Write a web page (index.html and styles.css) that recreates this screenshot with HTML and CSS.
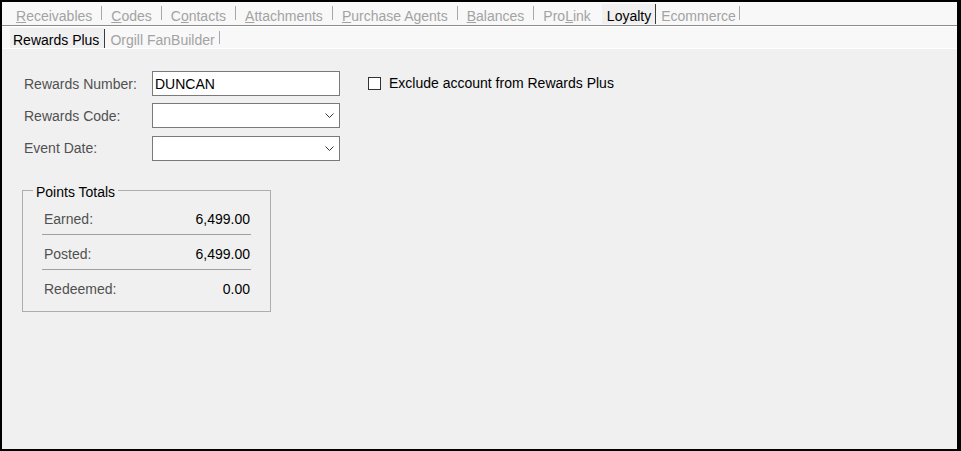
FILE: index.html
```html
<!DOCTYPE html>
<html>
<head>
<meta charset="utf-8">
<link rel="stylesheet" href="styles.css">
</head>
<body>
<div class="window">
  <div class="tabs tabs-main">
    <span class="tab first"><u>R</u>eceivables</span><span class="sep"></span>
    <span class="tab"><u>C</u>odes</span><span class="sep"></span>
    <span class="tab">C<u>o</u>ntacts</span><span class="sep"></span>
    <span class="tab"><u>A</u>ttachments</span><span class="sep"></span>
    <span class="tab"><u>P</u>urchase Agents</span><span class="sep"></span>
    <span class="tab"><u>B</u>alances</span><span class="sep"></span>
    <span class="tab">Pro<u>L</u>ink</span><span class="sep hidden"></span>
    <span class="tab active">Loyalty</span><span class="sep dark"></span>
    <span class="tab after-active">Ecommerce</span><span class="sep"></span>
  </div>
  <div class="tabs tabs-sub">
    <span class="tab active">Rewards Plus</span><span class="sep dark"></span>
    <span class="tab after-active">Orgill FanBuilder</span><span class="sep"></span>
  </div>
  <div class="content">
    <div class="top">
      <div class="form">
        <span class="label">Rewards Number:</span>
        <div class="field text">DUNCAN</div>
        <span class="label">Rewards Code:</span>
        <div class="field combo"><svg class="chev" width="9" height="5" viewBox="0 0 9 5"><path d="M0.5 0.5 L4.5 4.5 L8.5 0.5" fill="none" stroke="#3a3a3a" stroke-width="1"/></svg></div>
        <span class="label last">Event Date:</span>
        <div class="field combo last"><svg class="chev" width="9" height="5" viewBox="0 0 9 5"><path d="M0.5 0.5 L4.5 4.5 L8.5 0.5" fill="none" stroke="#3a3a3a" stroke-width="1"/></svg></div>
      </div>
      <label class="check"><span class="box"></span><span class="check-text">Exclude account from Rewards Plus</span></label>
    </div>
    <div class="group">
      <span class="legend">Points Totals</span>
      <div class="row"><span class="row-label">Earned:</span><span class="row-value">6,499.00</span></div>
      <div class="row"><span class="row-label">Posted:</span><span class="row-value">6,499.00</span></div>
      <div class="row last"><span class="row-label">Redeemed:</span><span class="row-value">0.00</span></div>
    </div>
  </div>
</div>
</body>
</html>
```

FILE: styles.css
```css
html, body {
  margin: 0;
  padding: 0;
  background: #000;
}

body {
  font-family: "Liberation Sans", Arial, sans-serif;
  font-size: 14px;
}

.window {
  width: 961px;
  height: 451px;
  box-sizing: border-box;
  border-style: solid;
  border-color: #000;
  border-width: 2px 4px 2px 2px;
  background: #f0f0f0;
  display: flex;
  flex-direction: column;
}

.tabs {
  display: flex;
  align-items: flex-start;
  background: #f8f8f8;
  white-space: nowrap;
}

.tabs-main {
  height: 23px;
  border-bottom: 1px solid #8c8c8c;
  box-shadow: 0 1px 0 #ffffff;
  padding-left: 5px;
  margin-bottom: 1px;
}

.tabs-sub {
  height: 21px;
  border-bottom: 1px solid #ffffff;
  padding-left: 8px;
}

.tab {
  color: #a3a3a3;
  box-sizing: border-box;
  height: 20px;
  padding: 4px 9px 0 9px;
  line-height: 16px;
  margin-top: 2px;
}

.tab u {
  text-decoration-thickness: 1px;
  text-underline-offset: 1px;
}

.tab.active {
  color: #000;
  background: #f0f0f0;
  padding: 4px 4px 0 5px;
  margin-left: 1px;
}

.tab.after-active {
  padding: 4px 3px 0 5px;
}

.sep {
  width: 1px;
  height: 14px;
  margin-top: 4px;
  background: #a8a8a8;
}

.sep.hidden {
  background: transparent;
}

.sep.dark {
  background: #3c3c3c;
  height: 20px;
  margin-top: 2px;
}

.tabs-sub .tab {
  margin-top: 1px;
  padding-top: 4px;
  line-height: 16px;
}

.tabs-sub .tab.active {
  margin-left: 0;
  padding-left: 3px;
  padding-right: 5px;
}

.tabs-sub .tab.after-active {
  padding-left: 5px;
  padding-right: 4px;
}

.tabs-sub .sep {
  margin-top: 4px;
  height: 13px;
}

.tabs-sub .sep.dark {
  margin-top: 2px;
  height: 19px;
}

.content {
  flex: 1;
  padding: 22px 0 0 20px;
}

.top {
  display: flex;
  align-items: flex-start;
}

.form {
  display: grid;
  grid-template-columns: 128px 188px;
  grid-auto-rows: 25px;
  row-gap: 7px;
  margin-left: 2px;
  align-items: center;
}

.label {
  color: #505050;
  line-height: 16px;
}

.label.last,
.field.last {
  margin-top: 1px;
}

.field {
  box-sizing: border-box;
  height: 25px;
  border: 1px solid #7a7a7a;
  background: #fff;
  display: flex;
  align-items: center;
}

.field.text {
  padding-left: 2px;
  color: #000;
  line-height: 16px;
}

.field.combo {
  justify-content: flex-end;
  padding-right: 5px;
}

.chev {
  display: block;
}

.check {
  display: flex;
  align-items: center;
  height: 25px;
  margin-left: 28px;
  margin-top: -1px;
}

.box {
  width: 13px;
  height: 13px;
  box-sizing: border-box;
  border: 1px solid #333;
  background: #fff;
  margin-top: 1px;
}

.check-text {
  margin-left: 8px;
  color: #000;
  line-height: 16px;
}

.group {
  position: relative;
  margin-top: 30px;
  width: 249px;
  height: 122px;
  box-sizing: border-box;
  border: 1px solid #adadad;
  padding: 9px 19px 0 19px;
}

.legend {
  position: absolute;
  left: 10px;
  top: -7px;
  padding: 0 3px;
  background: #f0f0f0;
  color: #000;
  line-height: 16px;
}

.row {
  display: flex;
  justify-content: space-between;
  line-height: 16px;
  padding: 11px 0 7px 0;
  border-bottom: 1px solid #a0a0a0;
}

.row.last {
  border-bottom: none;
}

.row-label {
  color: #505050;
  padding-left: 2px;
}

.row-value {
  color: #000;
  padding-right: 1px;
}
```
